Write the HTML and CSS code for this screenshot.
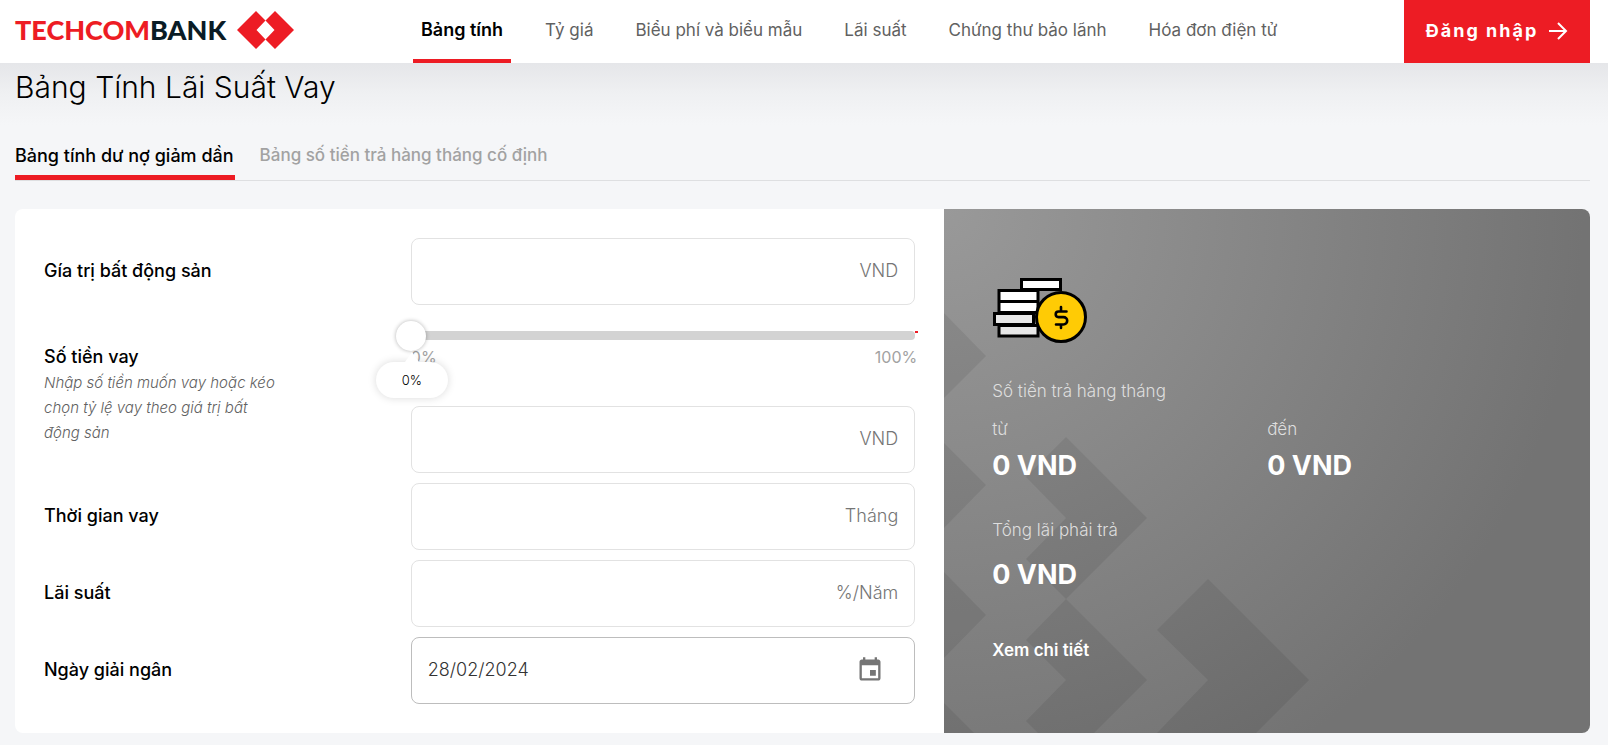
FILE: index.html
```html
<!DOCTYPE html>
<html lang="vi">
<head>
<meta charset="utf-8">
<meta name="viewport" content="width=device-width, initial-scale=1">
<title>Bảng Tính Lãi Suất Vay</title>
<link rel="stylesheet" href="styles.css">
</head>
<body>
<header class="header">
  <a class="logo" href="#" aria-label="Techcombank">
    <span class="logo-text"><span class="logo-red">TECHCOM</span>BANK</span>
    <svg class="logo-mark" viewBox="0 0 57 38" aria-hidden="true">
      <path fill="#ed1c24" d="M0 19 19 0l9.5 9.5-9 9.5 9 9.5L19 38zM57 19 38 0l-9.500 9.500 9 9.500-9 9.500L38 38z"/>
    </svg>
  </a>
  <nav class="nav">
    <a class="nav-link active" href="#">Bảng tính</a>
    <a class="nav-link" href="#">Tỷ giá</a>
    <a class="nav-link" href="#">Biểu phí và biểu mẫu</a>
    <a class="nav-link" href="#">Lãi suất</a>
    <a class="nav-link" href="#">Chứng thư bảo lãnh</a>
    <a class="nav-link" href="#">Hóa đơn điện tử</a>
  </nav>
  <button class="login" type="button">Đăng nhập
    <svg class="login-arrow" viewBox="0 0 20 20" aria-hidden="true"><path d="M1 10h17M10 2l8 8-8 8" fill="none" stroke="#fff" stroke-width="2"/></svg>
  </button>
</header>

<main class="page">
  <h1 class="title">Bảng Tính Lãi Suất Vay</h1>
  <div class="tabs" role="tablist">
    <button class="tab selected" type="button" role="tab" aria-selected="true">Bảng tính dư nợ giảm dần</button>
    <button class="tab" type="button" role="tab" aria-selected="false">Bảng số tiền trả hàng tháng cố định</button>
  </div>

  <section class="panel">
    <form class="form">
      <div class="row">
        <label class="label" for="value">Gía trị bất động sản</label>
        <input class="field" id="value" type="text" placeholder="VND">
      </div>
      <div class="row">
        <div>
          <label class="label" for="amount">Số tiền vay</label>
          <p class="hint">Nhập số tiền muốn vay hoặc kéo chọn tỷ lệ vay theo giá trị bất động sản</p>
        </div>
        <div class="amount">
          <div class="slider">
            <input class="range" type="range" min="0" max="100" value="0" aria-label="Tỷ lệ vay">
            <div class="scale"><span>0%</span><span>100%</span></div>
            <output class="bubble">0%</output>
          </div>
          <input class="field" id="amount" type="text" placeholder="VND">
        </div>
      </div>
      <div class="row">
        <label class="label" for="term">Thời gian vay</label>
        <input class="field" id="term" type="text" placeholder="Tháng">
      </div>
      <div class="row">
        <label class="label" for="rate">Lãi suất</label>
        <input class="field" id="rate" type="text" placeholder="%/Năm">
      </div>
      <div class="row">
        <label class="label" for="date">Ngày giải ngân</label>
        <div class="date">
          <input class="date-input" id="date" type="text" value="28/02/2024">
          <button class="date-button" type="button" aria-label="Chọn ngày">
            <svg viewBox="0 0 24 24" width="28" height="28" aria-hidden="true"><path fill="#757575" d="M17 12h-5v5h5v-5zM16 1v2H8V1H6v2H5c-1.110 0-1.990.9-1.990 2L3 19c0 1.100.89 2 2 2h14c1.100 0 2-.9 2-2V5c0-1.100-.9-2-2-2h-1V1h-2zm3 18H5V8h14v11z"/></svg>
          </button>
        </div>
      </div>
    </form>

    <aside class="result">
      <svg class="pattern" viewBox="0 0 366 524" aria-hidden="true">
        <g fill="#000" fill-opacity=".07">
          <path d="M0 104l42 43-42 42zM0 234l42 42-42 43zM0 363l42 43-42 43zM0 494l30 30H0z"/>
          <path d="M122 228l81 81-81 81-40-40 40-41-40-41z"/>
          <path d="M122 390l81 81-53 53H94l-12-12 40-41-40-40z"/>
          <path d="M264 370l101 101-53 53H213l51-53-51-50z"/>
        </g>
      </svg>
      <svg class="coins" viewBox="0 0 96 66" aria-hidden="true">
        <g stroke="#000" stroke-width="3">
          <path fill="#fff" d="M29.500 2.500h39v10h-39z"/>
          <path fill="#fff" d="M7 13.500h39v11H7zM7 24.500h39v11H7z"/>
          <path fill="#e8e8e8" d="M7 48.500h39v10.500H7zM2.500 36.500h39v11h-39z"/>
          <circle cx="69" cy="40" r="24.500" fill="#ffcb05"/>
        </g>
        <path fill="none" stroke="#000" stroke-width="2.600" stroke-linecap="round" d="M74.500 34.500h-8a2.800 2.800 0 0 0 0 5.600h5a3.700 3.700 0 0 1 0 7.400H64M69 30v4M69 48v3"/>
      </svg>
      <p class="caption">Số tiền trả hàng tháng</p>
      <div class="amounts">
        <div><p class="caption">từ</p><p class="sum">0 VND</p></div>
        <div><p class="caption">đến</p><p class="sum">0 VND</p></div>
      </div>
      <p class="caption total">Tổng lãi phải trả</p>
      <p class="sum total-sum">0 VND</p>
      <a class="details" href="#">Xem chi tiết</a>
    </aside>
  </section>
</main>
</body>
</html>
```
FILE: styles.css
```css
* { box-sizing: border-box; }
body {
  margin: 0;
  background: #f5f6f8;
  color: #000;
  font-family: Inter, "Liberation Sans", sans-serif;
  font-size: 17px;
}
h1, p { margin: 0; }
a { color: inherit; text-decoration: none; }
button, input { font: inherit; }
button { border: 0; padding: 0; background: none; cursor: pointer; }

.header {
  display: grid;
  grid-template-columns: 398px 1fr auto;
  height: 63px;
  padding: 0 18px 0 15px;
  background: #fff;
}
.logo { display: flex; align-items: center; gap: 11px; height: 60px; }
.logo-text { color: #0a1c26; font: 900 27px/36px Lato, sans-serif; }
.logo-red { color: #ed1c24; }
.logo-mark { width: 57px; height: 38px; }
.nav { display: flex; gap: 26px; white-space: nowrap; }
.nav-link {
  padding: 1px 8px 0;
  border-bottom: 4px solid transparent;
  color: #616161;
  line-height: 58px;
}
.nav-link.active { border-color: #ed1c24; color: #000; font-size: 18px; font-weight: 600; }
.login {
  display: flex;
  align-items: center;
  justify-content: center;
  gap: 10px;
  width: 186px;
  padding-bottom: 2px;
  background: #ed1c24;
  color: #fff;
  font-size: 18px;
  font-weight: 700;
  letter-spacing: 2px;
}
.login-arrow { width: 20px; height: 20px; }

.page {
  padding: 0 18px 12px 15px;
  background: linear-gradient(#e5e6e9, #eff0f2 30px, #f5f6f8 62px);
}
.title { padding-top: 3px; font-size: 30px; font-weight: 300; line-height: 42px; }
.tabs {
  display: flex;
  gap: 25px;
  margin-top: 16px;
  border-bottom: 1px solid #dedfe1;
}
.tab {
  padding: 12px 1px 0 0;
  border-bottom: 5px solid transparent;
  color: #a2a2a2;
  font-weight: 500;
  line-height: 39px;
}
.tab.selected { border-color: #ed1c24; color: #000; font-size: 18px; }

.panel {
  display: grid;
  grid-template-columns: 59fr 41fr;
  margin-top: 28px;
  border-radius: 8px;
  background: #fff;
  overflow: hidden;
}
.form { display: grid; gap: 10px; padding: 29px; }
.row {
  display: grid;
  grid-template-columns: 421fr 579fr;
  align-items: center;
}
.label { padding-bottom: 2px; font-size: 18px; font-weight: 500; line-height: 26px; }
.hint {
  max-width: 240px;
  color: #616161;
  font-size: 15px;
  font-style: italic;
  font-weight: 300;
  line-height: 25px;
}
.field, .date {
  width: 100%;
  height: 67px;
  padding: 0 16px 2px;
  border: 1px solid #e2e2e2;
  border-radius: 8px;
  background: #fff;
}
.field { text-align: right; font-size: 18px; font-weight: 300; }
.field::placeholder { color: #757575; opacity: 1; }
.date { display: flex; align-items: center; padding-right: 30px; border-color: #bdbdbd; }
.date-input {
  flex: 1;
  min-width: 0;
  padding: 0;
  border: 0;
  color: #333;
  font-size: 18px;
  font-weight: 300;
}
.date-button { display: flex; }

.amount { display: grid; gap: 39px; }
.slider { position: relative; padding-top: 5px; }
.slider::before {
  content: "";
  position: absolute;
  inset: 16px 0 auto;
  height: 9px;
  border-radius: 4px;
  background: #d3d3d3;
}
.slider::after {
  content: "";
  position: absolute;
  top: 16px;
  right: -3px;
  width: 3px;
  height: 2px;
  background: #ed1c24;
}
.range {
  position: relative;
  display: block;
  width: calc(100% + 30px);
  height: 31px;
  margin: 0 -15px;
  background: none;
  appearance: none;
}
.range::-webkit-slider-thumb {
  width: 30px;
  height: 30px;
  border-radius: 50%;
  background: #fff;
  box-shadow: 0 0 4px rgba(0, 0, 0, .3);
  appearance: none;
}
.scale {
  display: flex;
  justify-content: space-between;
  margin: -3px -2px 0 0;
  color: #a2a2a2;
  font-size: 16px;
  line-height: 19px;
}
.bubble {
  position: absolute;
  top: 47px;
  left: -35px;
  width: 72px;
  border-radius: 18px;
  background: #fff;
  box-shadow: 0 0 8px rgba(0, 0, 0, .15);
  font: 300 13px/36px Inter, sans-serif;
  text-align: center;
}
.bubble::before {
  content: "";
  position: absolute;
  top: -10px;
  left: 29px;
  border: 7px solid transparent;
  border-top: 0;
  border-bottom: 10px solid #fff;
}

.result {
  position: relative;
  padding: 68px 48px 0;
  background: radial-gradient(circle at 0 0, #999, #737373 640px);
  color: #fff;
}
.pattern { position: absolute; left: 0; bottom: 0; height: 100%; }
.coins { position: relative; display: block; width: 96px; height: 66px; margin-bottom: 35px; }
.caption { position: relative; color: #dedede; font-weight: 300; line-height: 26px; }
.amounts {
  position: relative;
  display: grid;
  grid-template-columns: 1fr 1fr;
  margin-top: 12px;
}
.sum { position: relative; font-size: 27px; font-weight: 700; line-height: 48px; }
.total { margin-top: 27px; }
.total-sum { margin-top: 8px; }
.details { position: relative; display: inline-block; margin-top: 38px; font-weight: 600; line-height: 26px; }
```
